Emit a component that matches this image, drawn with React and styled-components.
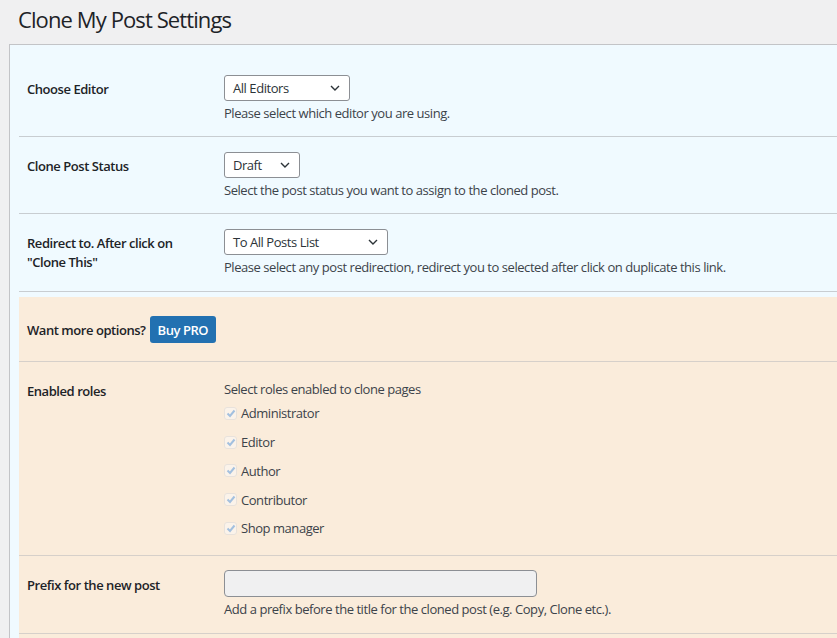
import React from "react";
import styled, { createGlobalStyle } from "styled-components";

const GlobalStyle = createGlobalStyle`
  body {
    margin: 0;
    background: #f0f0f1;
    color: #1d2327;
    font-family: "Open Sans", "Noto Sans", sans-serif;
    font-size: 13px;
    letter-spacing: -0.45px;
    overflow: hidden;
  }
`;

const Title = styled.h1`
  margin: 0;
  padding: 4px 0 0 18px;
  font-size: 22px;
  font-weight: 400;
  letter-spacing: -0.9px;
  line-height: 30px;
  color: #1d2327;
`;

const Panel = styled.div`
  margin: 10px -20px 0 9px;
  padding: 15px 0 0 9px;
  border-top: 1px solid #c3c4c7;
  border-left: 1px solid #c3c4c7;
  background: #f0faff;
`;

const Section = styled.div`
  background: ${(p) => (p.$pro ? "#faecdb" : "transparent")};
  margin-top: ${(p) => (p.$pro ? "5px" : "0")};
  padding-bottom: ${(p) => (p.$pro ? "20px" : "0")};
`;

const Row = styled.div`
  display: grid;
  grid-template-columns: 205px 1fr;
  border-bottom: 1px solid ${(p) => (p.$pro ? "#d6d0ca" : "#c8cdd1")};
`;

const Label = styled.div`
  padding: 20px 10px 18px 8px;
  font-weight: 600;
  line-height: 19px;
  color: #1d2327;
`;

const Field = styled.div`
  padding: ${(p) => p.$pad || "15px 10px 14px 0"};
`;

const Wide = styled.div`
  grid-column: 1 / -1;
  display: flex;
  align-items: center;
  gap: 4px;
  padding: 19px 8px 18px;
  font-weight: 600;
`;

const Select = styled.div`
  box-sizing: border-box;
  width: ${(p) => p.$w}px;
  height: 26px;
  display: flex;
  align-items: center;
  justify-content: space-between;
  padding: 0 9px 0 8px;
  background: #fff;
  border: 1px solid #8c8f94;
  border-radius: 3px;
  color: #2c3338;
  font-size: 13px;
`;

const TextInput = styled.div`
  box-sizing: border-box;
  width: 313px;
  height: 27px;
  background: #f0f0f1;
  border: 1px solid #8c8f94;
  border-radius: 4px;
`;

const Description = styled.p`
  margin: 4px 0 0;
  line-height: 17px;
  color: #3c434a;
`;

const Intro = styled.div`
  line-height: 18px;
  color: #3c434a;
`;

const RoleList = styled.div`
  display: flex;
  flex-direction: column;
  margin-top: 1px;
`;

const Role = styled.label`
  display: flex;
  align-items: center;
  gap: 4px;
  height: 28.75px;
  color: #3c434a;
`;

const Box = styled.span`
  box-sizing: border-box;
  width: 13px;
  height: 13px;
  display: flex;
  align-items: center;
  justify-content: center;
  background: #fbf3ea;
  border: 1px solid #e8e2dc;
  border-radius: 3px;
`;

const ProButton = styled.button`
  height: 27px;
  padding: 0 8px;
  border: none;
  border-radius: 3px;
  background: #2271b1;
  color: #fff;
  font-family: inherit;
  font-size: 13px;
  font-weight: 600;
  letter-spacing: -0.45px;
`;

const Chevron = () => (
  <svg width="10" height="6" viewBox="0 0 10 6">
    <polyline points="1,1 5,5 9,1" fill="none" stroke="#2c3338" strokeWidth="1.4" />
  </svg>
);

const Check = () => (
  <svg width="10" height="9" viewBox="0 0 10 9">
    <polyline points="1.5,4.5 4,7 8.5,1.5" fill="none" stroke="#a3c0df" strokeWidth="2" />
  </svg>
);

const roles = ["Administrator", "Editor", "Author", "Contributor", "Shop manager"];

export default function App() {
  return (
    <>
      <GlobalStyle />
      <Title>Clone My Post Settings</Title>
      <Panel>
        <Section>
          <Row>
            <Label>Choose Editor</Label>
            <Field>
              <Select $w={126}>
                All Editors <Chevron />
              </Select>
              <Description>Please select which editor you are using.</Description>
            </Field>
          </Row>
          <Row>
            <Label>Clone Post Status</Label>
            <Field>
              <Select $w={76}>
                Draft <Chevron />
              </Select>
              <Description>Select the post status you want to assign to the cloned post.</Description>
            </Field>
          </Row>
          <Row>
            <Label>
              Redirect to. After click on
              <br />
              "Clone This"
            </Label>
            <Field $pad="15px 10px 15px 0">
              <Select $w={164}>
                To All Posts List <Chevron />
              </Select>
              <Description>
                Please select any post redirection, redirect you to selected after click on duplicate this link.
              </Description>
            </Field>
          </Row>
        </Section>
        <Section $pro>
          <Row $pro>
            <Wide>
              Want more options? <ProButton>Buy PRO</ProButton>
            </Wide>
          </Row>
          <Row $pro>
            <Label>Enabled roles</Label>
            <Field $pad="18px 10px 12px 0">
              <Intro>Select roles enabled to clone pages</Intro>
              <RoleList>
                {roles.map((r) => (
                  <Role key={r}>
                    <Box>
                      <Check />
                    </Box>
                    {r}
                  </Role>
                ))}
              </RoleList>
            </Field>
          </Row>
          <Row $pro>
            <Label>Prefix for the new post</Label>
            <Field $pad="14px 10px 15px 0">
              <TextInput />
              <Description>Add a prefix before the title for the cloned post (e.g. Copy, Clone etc.).</Description>
            </Field>
          </Row>
        </Section>
      </Panel>
    </>
  );
}
